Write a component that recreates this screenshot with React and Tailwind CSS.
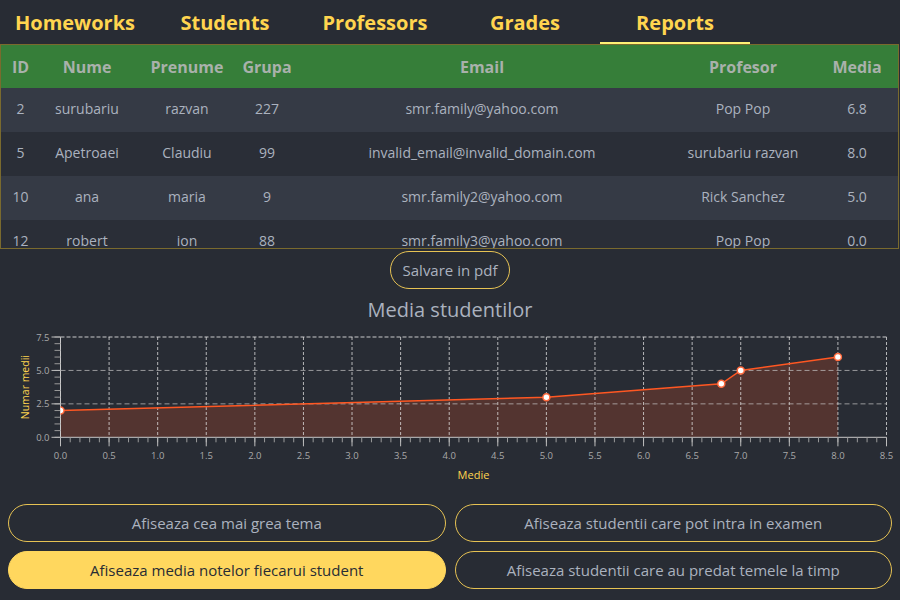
import { useState } from "react";

const tabs = ["Homeworks", "Students", "Professors", "Grades", "Reports"];

const students = [
  { id: 2, nume: "surubariu", prenume: "razvan", grupa: 227, email: "smr.family@yahoo.com", prof: "Pop Pop", media: "6.8" },
  { id: 5, nume: "Apetroaei", prenume: "Claudiu", grupa: 99, email: "invalid_email@invalid_domain.com", prof: "surubariu razvan", media: "8.0" },
  { id: 10, nume: "ana", prenume: "maria", grupa: 9, email: "smr.family2@yahoo.com", prof: "Rick Sanchez", media: "5.0" },
  { id: 12, nume: "robert", prenume: "ion", grupa: 88, email: "smr.family3@yahoo.com", prof: "Pop Pop", media: "0.0" },
];

const points = [
  [0, 2],
  [5, 3],
  [6.8, 4],
  [7, 5],
  [8, 6],
];

// plot area in svg coords
const X0 = 60.5;
const X1 = 886.5;
const Y0 = 112.3; // value 0
const Y1 = 12; // value 7.5
const sx = (v) => X0 + (v / 8.5) * (X1 - X0);
const sy = (v) => Y0 - (v / 7.5) * (Y0 - Y1);

function Chart() {
  const line = points.map(([x, y]) => `${sx(x)},${sy(y)}`).join(" ");
  const area = `${sx(0)},${Y0} ${line} ${sx(8)},${Y0}`;
  const halves = Array.from({ length: 18 }, (_, i) => i * 0.5);
  const tenths = Array.from({ length: 86 }, (_, i) => i / 10);
  const yMinor = Array.from({ length: 16 }, (_, i) => i * 0.5);

  return (
    <svg width="900" height="170" viewBox="0 0 900 170" className="block" style={{ fontFamily: "'Open Sans', sans-serif" }}>
      <defs>
        <clipPath id="plot">
          <rect x={X0} y={Y1 - 1} width={X1 - X0} height={Y0 - Y1 + 1} />
        </clipPath>
      </defs>

      <g clipPath="url(#plot)">
        <polygon points={area} fill="rgba(255,87,34,0.2)" />
      </g>

      {/* vertical grid */}
      {halves.slice(1).map((v) => (
        <line key={v} x1={sx(v)} x2={sx(v)} y1={Y1} y2={Y0} stroke="rgba(230,230,230,0.75)" strokeWidth="1" strokeDasharray="3 2" />
      ))}
      {/* horizontal grid */}
      {[2.5, 5].map((v) => (
        <line key={v} x1={X0} x2={X1} y1={sy(v)} y2={sy(v)} stroke="rgba(200,200,200,0.7)" strokeWidth="1" strokeDasharray="5 3" />
      ))}
      <line x1={X0} x2={X1} y1={Y1} y2={Y1} stroke="rgba(230,230,230,0.85)" strokeWidth="1" strokeDasharray="4 2" />

      {/* axes */}
      <line x1={X0} x2={X0} y1={Y1} y2={Y0} stroke="#c8c8c8" strokeWidth="1" />
      <line x1={X0} x2={X1} y1={Y0} y2={Y0} stroke="#c8c8c8" strokeWidth="1" />

      {/* y ticks */}
      {yMinor.map((v) => (
        <line key={v} x1={X0 - 6} x2={X0} y1={sy(v)} y2={sy(v)} stroke="#9a9a9a" strokeWidth="1" />
      ))}
      {[0, 2.5, 5, 7.5].map((v) => (
        <g key={v}>
          <line x1={X0 - 9} x2={X0} y1={sy(v)} y2={sy(v)} stroke="#bdbdbd" strokeWidth="1" />
          <text x={X0 - 11} y={sy(v) + 3.5} textAnchor="end" fontSize="9.5" fill="#a9a9a9">
            {v.toFixed(1)}
          </text>
        </g>
      ))}

      {/* x ticks */}
      {tenths.map((v) => (
        <line key={v} x1={sx(v)} x2={sx(v)} y1={Y0} y2={Y0 + 5} stroke="#9a9a9a" strokeWidth="1" />
      ))}
      {halves.map((v) => (
        <g key={v}>
          <line x1={sx(v)} x2={sx(v)} y1={Y0} y2={Y0 + 9} stroke="#bdbdbd" strokeWidth="1" />
          <text x={sx(v)} y={Y0 + 21.5} textAnchor="middle" fontSize="9.5" fill="#a9a9a9">
            {v.toFixed(1)}
          </text>
        </g>
      ))}

      {/* line + points */}
      <g clipPath="url(#plot)">
        <polyline points={line} fill="none" stroke="#ff5722" strokeWidth="1.5" />
        {points.map(([x, y]) => (
          <circle key={x} cx={sx(x)} cy={sy(y)} r="3.5" fill="#fff" stroke="#ff6a3d" strokeWidth="1.5" />
        ))}
      </g>

      <text x={(X0 + X1) / 2} y={154} textAnchor="middle" fontSize="11" fill="#ffd54f">
        Medie
      </text>
      <text transform={`translate(29 ${(Y0 + Y1) / 2}) rotate(-90)`} textAnchor="middle" fontSize="10.5" fill="#ffd54f">
        Numar medii
      </text>
    </svg>
  );
}

export default function App() {
  const [active, setActive] = useState("Reports");
  const [report, setReport] = useState("media");

  const reports = [
    { key: "grea", label: "Afiseaza cea mai grea tema" },
    { key: "examen", label: "Afiseaza studentii care pot intra in examen" },
    { key: "media", label: "Afiseaza media notelor fiecarui student" },
    { key: "timp", label: "Afiseaza studentii care au predat temele la timp" },
  ];

  return (
    <div className="w-[900px] h-[600px] overflow-hidden bg-[#282c34] text-[#abb2bf]" style={{ fontFamily: "'Open Sans', 'Noto Sans', sans-serif" }}>
      {/* Tabs */}
      <nav className="flex h-[44px]">
        {tabs.map((t) => (
          <button
            key={t}
            onClick={() => setActive(t)}
            className={`w-[150px] h-[44px] text-[20px] font-bold text-[#ffd54f] leading-none pt-[3px] border-b-2 ${
              active === t ? "border-[#fff176]" : "border-transparent"
            }`}
          >
            {t}
          </button>
        ))}
      </nav>

      {/* Table */}
      <div className="h-[205px] overflow-hidden border border-[#7a6a2e] mr-[1px]">
        <table className="w-full table-fixed border-collapse text-[14px]">
          <colgroup>
            <col className="w-[39px]" />
            <col className="w-[94px]" />
            <col className="w-[106px]" />
            <col className="w-[54px]" />
            <col className="w-[376px]" />
            <col className="w-[146px]" />
            <col />
          </colgroup>
          <thead>
            <tr className="bg-[#367e39] h-[43px] text-[16px] font-bold text-[#a9b1ab]">
              <th className="font-bold">ID</th>
              <th className="font-bold">Nume</th>
              <th className="font-bold">Prenume</th>
              <th className="font-bold">Grupa</th>
              <th className="font-bold">Email</th>
              <th className="font-bold">Profesor</th>
              <th className="font-bold">Media</th>
            </tr>
          </thead>
          <tbody>
            {students.map((s, i) => (
              <tr key={s.id} className={`h-[44px] text-center ${i % 2 === 0 ? "bg-[#353a45]" : "bg-[#2a2e37]"}`}>
                <td className="pb-[4px]">{s.id}</td>
                <td className="pb-[4px]">{s.nume}</td>
                <td className="pb-[4px]">{s.prenume}</td>
                <td className="pb-[4px]">{s.grupa}</td>
                <td className="pb-[4px]">{s.email}</td>
                <td className="pb-[4px]">{s.prof}</td>
                <td className="pb-[4px]">{s.media}</td>
              </tr>
            ))}
          </tbody>
        </table>
      </div>

      <div className="flex justify-center mt-[2px]">
        <button className="w-[120px] h-[38px] rounded-full border border-[#e6c253] text-[15px] text-[#abb2bf]">
          Salvare in pdf
        </button>
      </div>

      <h2 className="h-[30px] mt-[6px] leading-[30px] text-center text-[20px] text-[#abb2bf]">Media studentilor</h2>

      <Chart />

      <div className="grid grid-cols-2 gap-x-[9px] gap-y-[9px] px-[8px] mt-[9px]">
        {reports.map((r) => (
          <button
            key={r.key}
            onClick={() => setReport(r.key)}
            className={`h-[38px] rounded-full border text-[15px] ${
              report === r.key
                ? "bg-[#ffd75e] border-[#ffd75e] text-[#282c34]"
                : "border-[#e6c253] text-[#abb2bf]"
            }`}
          >
            {r.label}
          </button>
        ))}
      </div>
    </div>
  );
}
